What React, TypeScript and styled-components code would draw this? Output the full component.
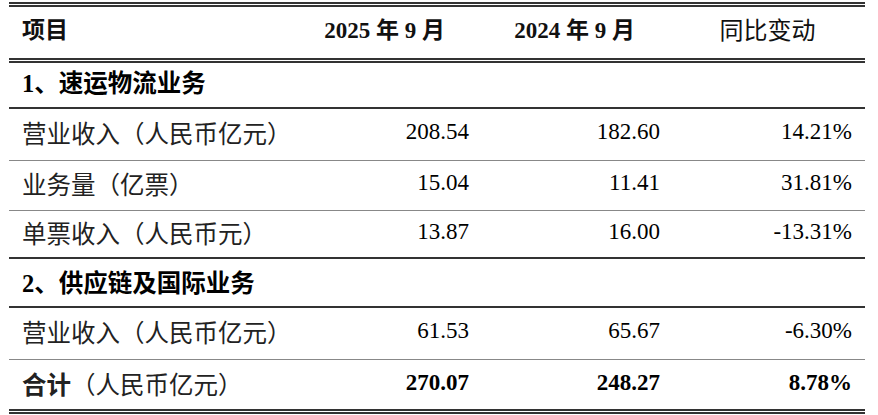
import React from "react";
import styled, { createGlobalStyle } from "styled-components";

const Global = createGlobalStyle`
  html, body { margin: 0; padding: 0; background: #fff; }
  body { font-family: "Liberation Serif", "Noto Sans CJK SC", serif; }
`;

const Wrap = styled.div`
  padding: 2px 13px 0 9px;
  width: 856px;
`;

const Table = styled.table`
  width: 856px;
  border-collapse: collapse;
  table-layout: fixed;
  font-size: 23px;
  color: #111;
`;

type Line = "double" | "dark" | "thin";

const borderFor = (l?: Line) =>
  l === "double"
    ? "5px double #333"
    : l === "dark"
    ? "2px solid #333"
    : l === "thin"
    ? "1px solid #888"
    : "none";

const Row = styled.tr<{ $top?: Line; $bottom?: Line; $h: number; $lift: number }>`
  height: ${(p) => p.$h}px;
  border-top: ${(p) => borderFor(p.$top)};
  border-bottom: ${(p) => borderFor(p.$bottom)};
  & > td,
  & > th {
    padding-bottom: ${(p) => p.$lift}px;
  }
`;

const Label = styled.td<{ $bold?: boolean }>`
  padding-left: 13px;
  text-align: left;
  vertical-align: middle;
  white-space: nowrap;
  font-size: 24.5px;
  font-weight: ${(p) => (p.$bold ? 700 : 400)};
  color: ${(p) => (p.$bold ? "#000" : "#222")};
`;

const Head = styled.th<{ $bold?: boolean }>`
  padding-top: 0;
  text-align: center;
  vertical-align: middle;
  white-space: nowrap;
  font-weight: ${(p) => (p.$bold ? 700 : 400)};
  color: #111;
`;

const HeadLabel = styled(Head)`
  text-align: left;
  padding-left: 13px;
`;

const HeadCjk = styled(Head)`
  font-size: 24px;
`;

const Num = styled.td<{ $bold?: boolean; $pad: number }>`
  padding-top: 0;
  padding-right: ${(p) => p.$pad}px;
  text-align: right;
  vertical-align: middle;
  white-space: nowrap;
  font-weight: ${(p) => (p.$bold ? 700 : 400)};
  color: #000;
`;

const Plain = styled.span`
  font-weight: 400;
  color: #222;
`;

const pads = [10, 10, 13];

type DataRow = {
  label: React.ReactNode;
  values: [string, string, string];
  h: number;
  lift: number;
  bottom: Line;
  bold?: boolean;
};

const rows: (DataRow | { section: string; h: number; lift: number; bottom: Line })[] = [
  { section: "1、速运物流业务", h: 46, lift: 8, bottom: "dark" },
  { label: "营业收入（人民币亿元）", values: ["208.54", "182.60", "14.21%"], h: 52, lift: 4, bottom: "thin" },
  { label: "业务量（亿票）", values: ["15.04", "11.41", "31.81%"], h: 50, lift: 4, bottom: "thin" },
  { label: "单票收入（人民币元）", values: ["13.87", "16.00", "-13.31%"], h: 48, lift: 4, bottom: "dark" },
  { section: "2、供应链及国际业务", h: 49, lift: 4, bottom: "dark" },
  { label: "营业收入（人民币亿元）", values: ["61.53", "65.67", "-6.30%"], h: 52, lift: 4, bottom: "thin" },
  {
    label: (
      <>
        <b>合计</b>
        <Plain>（人民币亿元）</Plain>
      </>
    ),
    values: ["270.07", "248.27", "8.78%"],
    h: 52,
    lift: 2,
    bottom: "double",
    bold: true,
  },
];

export default function App() {
  return (
    <>
      <Global />
      <Wrap>
        <Table>
          <colgroup>
            <col style={{ width: 281 }} />
            <col style={{ width: 189 }} />
            <col style={{ width: 191 }} />
            <col style={{ width: 195 }} />
          </colgroup>
          <thead>
            <Row $top="double" $bottom="double" $h={56} $lift={9}>
              <HeadLabel $bold>项目</HeadLabel>
              <Head $bold>2025 年 9 月</Head>
              <Head $bold>2024 年 9 月</Head>
              <HeadCjk>同比变动</HeadCjk>
            </Row>
          </thead>
          <tbody>
            {rows.map((r, i) =>
              "section" in r ? (
                <Row key={i} $h={r.h} $lift={r.lift} $bottom={r.bottom}>
                  <Label $bold colSpan={4}>
                    {r.section}
                  </Label>
                </Row>
              ) : (
                <Row key={i} $h={r.h} $lift={r.lift} $bottom={r.bottom}>
                  <Label>{r.label}</Label>
                  {r.values.map((v, j) => (
                    <Num key={j} $pad={pads[j]} $bold={r.bold}>
                      {v}
                    </Num>
                  ))}
                </Row>
              )
            )}
          </tbody>
        </Table>
      </Wrap>
    </>
  );
}
